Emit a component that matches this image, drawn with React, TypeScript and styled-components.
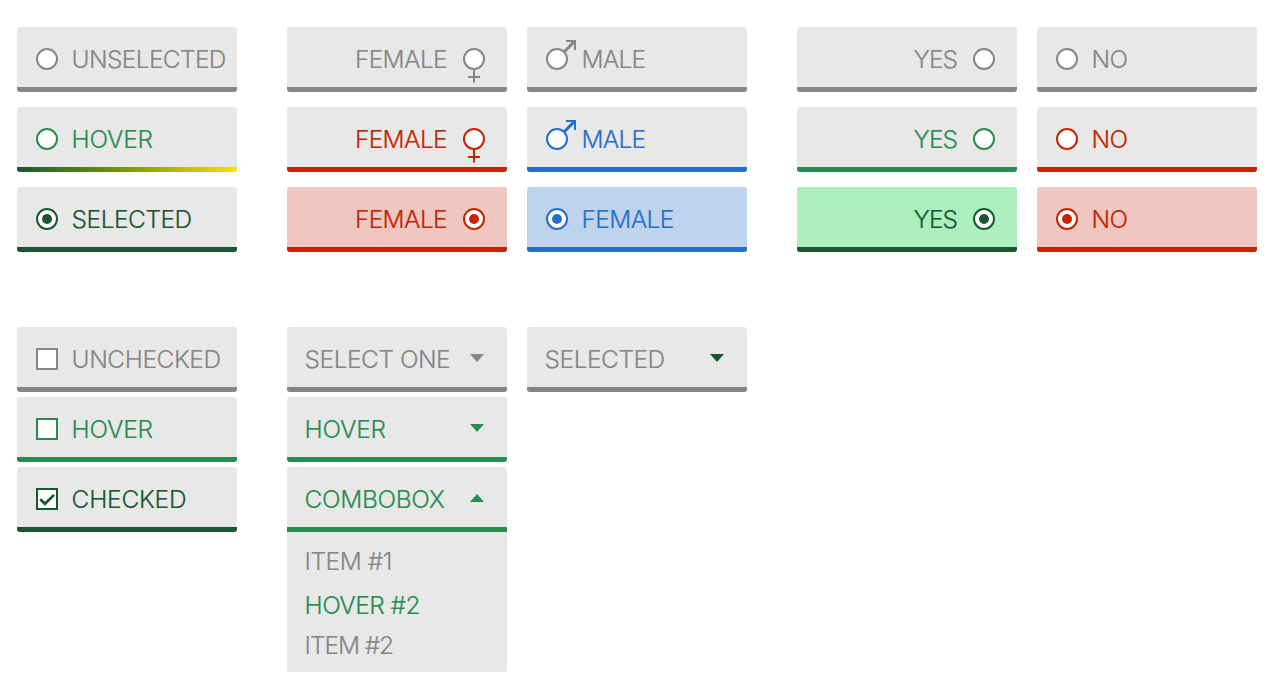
import React from "react";
import styled, { createGlobalStyle, css } from "styled-components";

const gray = "#868686";
const green = "#288c50";
const dark = "#1b5633";
const red = "#c62400";
const blue = "#246fca";
const surface = "#e8e8e8";
const pink = "#efc7c0";
const sky = "#bed3ee";
const mint = "#abefbf";

const GlobalStyle = createGlobalStyle`
  *, *::before, *::after { box-sizing: border-box; }
  body { margin: 0; background: #fff; }
`;

const Page = styled.main`
  display: flex;
  flex-direction: column;
  gap: 75px;
  min-height: 700px;
  padding: 27px 17px 0;
  font: 300 24.5px "Inter", "Liberation Sans", sans-serif;
  cursor: default;
`;

const Section = styled.section`
  display: flex;
  align-items: flex-start;
  gap: 50px;
`;

const Pair = styled.div`
  display: flex;
  align-items: flex-start;
  gap: 20px;
`;

const Stack = styled.div<{ $gap: number }>`
  display: flex;
  flex-direction: column;
  gap: ${(p) => p.$gap}px;
  width: 220px;
`;

const Card = styled.div<{ $color: string; $bar?: string; $fill?: string; $open?: boolean }>`
  display: flex;
  flex-direction: column;
  height: 65px;
  overflow: hidden;
  border-radius: ${(p) => (p.$open ? "3px 3px 0 0" : "3px")};
  background: ${(p) => p.$fill ?? surface};
  color: ${(p) => p.$color};

  &::after {
    content: "";
    height: 5px;
    background: ${(p) => p.$bar ?? p.$color};
  }
`;

const Face = styled.div<{ $kind: "start" | "end" | "select" }>`
  display: flex;
  align-items: center;
  height: 60px;
  ${(p) =>
    p.$kind === "start"
      ? css`
          gap: 14px;
          padding: 4px 0 0 19px;
        `
      : p.$kind === "end"
      ? css`
          flex-direction: row-reverse;
          gap: 16px;
          padding: 4px 22px 0 0;
        `
      : css`
          justify-content: space-between;
          padding: 4px 23px 0 18px;
        `}
`;

const Label = styled.span<{ $track: number }>`
  margin-left: -0.4px;
  line-height: 30px;
  letter-spacing: ${(p) => p.$track}px;
  white-space: pre;
  -webkit-text-stroke: 0.2px;
`;

const Radio = styled.span`
  position: relative;
  display: grid;
  place-items: center;
  flex: none;
  width: 22px;
  height: 22px;
  border: 2px solid currentColor;
  border-radius: 50%;
  background: #fff;
`;

const Dot = styled.span`
  width: 10px;
  height: 10px;
  border-radius: 50%;
  background: currentColor;
`;

const Box = styled.span`
  display: grid;
  place-items: center;
  flex: none;
  width: 22px;
  height: 22px;
  border: 2px solid currentColor;
  background: #fff;
`;

const Mark = styled.svg`
  position: absolute;
  left: -2px;
  top: -10px;
  overflow: visible;
`;

const Arrow = styled.svg<{ $color?: string }>`
  flex: none;
  margin-bottom: 2px;
  fill: ${(p) => p.$color ?? "currentColor"};
`;

const Menu = styled.ul`
  height: 140px;
  margin: -5px 0 0;
  padding: 9px 18px 0;
  list-style: none;
  border-radius: 0 0 3px 3px;
  background: ${surface};
`;

const Item = styled.li<{ $active?: boolean }>`
  display: flex;
  align-items: center;
  height: 40px;
  margin-top: ${(p) => (p.$active ? 4 : 0)}px;
  color: ${(p) => (p.$active ? green : gray)};
`;

/* letter spacing of each caption, in pixels */
const tracking: Record<string, number> = {
  UNSELECTED: -0.65,
  HOVER: -0.25,
  SELECTED: -0.5,
  FEMALE: -0.65,
  MALE: -0.8,
  YES: -1,
  NO: -0.8,
  UNCHECKED: -0.45,
  CHECKED: -0.25,
  "SELECT ONE": -0.5,
  COMBOBOX: -0.37,
  "ITEM #1": -0.5,
  "HOVER #2": -0.58,
  "ITEM #2": -1.1,
};

function Caption({ text }: { text: string }) {
  return <Label $track={tracking[text]}>{text}</Label>;
}

type OptionProps = {
  text: string;
  color: string;
  bar?: string;
  fill?: string;
  end?: boolean;
  on?: boolean;
  sign?: "female" | "male";
};

function RadioOption({ text, color, bar, fill, end, on, sign }: OptionProps) {
  return (
    <Card $color={color} $bar={bar} $fill={fill}>
      <Face $kind={end ? "end" : "start"}>
        <Radio>
          {on && <Dot />}
          {sign === "female" && (
            <Mark width="22" height="44" viewBox="0 -8 22 44" fill="currentColor">
              <path d="M10 21h2v13.5h-2zM5 28h12v2H5z" />
            </Mark>
          )}
          {sign === "male" && (
            <Mark width="32" height="30" viewBox="0 -8 32 30" fill="none" stroke="currentColor" strokeWidth="2">
              <path d="M20 -7h9v9" />
              <path d="M18.2 3.8L28.6 -6.6" strokeWidth="3" />
            </Mark>
          )}
        </Radio>
        <Caption text={text} />
      </Face>
    </Card>
  );
}

function CheckOption({ text, color, on }: { text: string; color: string; on?: boolean }) {
  return (
    <Card $color={color}>
      <Face $kind="start">
        <Box>
          {on && (
            <svg width="18" height="18" viewBox="2 2 18 18" fill="none" stroke="currentColor" strokeWidth="2.7">
              <path d="M4.2 11.3L9 15.8L18 6.9" />
            </svg>
          )}
        </Box>
        <Caption text={text} />
      </Face>
    </Card>
  );
}

type SelectProps = { text: string; color: string; arrow?: string; open?: boolean };

function Select({ text, color, arrow, open }: SelectProps) {
  return (
    <Card $color={color} $open={open}>
      <Face $kind="select">
        <Caption text={text} />
        <Arrow $color={arrow} width="14" height="8" viewBox="0 0 14 8">
          <path d={open ? "M0 8L7 0L14 8z" : "M0 0H14L7 8z"} />
        </Arrow>
      </Face>
    </Card>
  );
}

export default function App() {
  return (
    <>
      <GlobalStyle />
      <Page>
        <Section>
          <Stack $gap={15}>
            <RadioOption text="UNSELECTED" color={gray} />
            <RadioOption text="HOVER" color={green} bar={`linear-gradient(90deg, ${dark}, #7a9a00 50%, #fae000)`} />
            <RadioOption text="SELECTED" color={dark} on />
          </Stack>
          <Pair>
            <Stack $gap={15}>
              <RadioOption text="FEMALE" color={gray} end sign="female" />
              <RadioOption text="FEMALE" color={red} end sign="female" />
              <RadioOption text="FEMALE" color={red} fill={pink} end on />
            </Stack>
            <Stack $gap={15}>
              <RadioOption text="MALE" color={gray} sign="male" />
              <RadioOption text="MALE" color={blue} sign="male" />
              <RadioOption text="FEMALE" color={blue} fill={sky} on />
            </Stack>
          </Pair>
          <Pair>
            <Stack $gap={15}>
              <RadioOption text="YES" color={gray} end />
              <RadioOption text="YES" color={green} end />
              <RadioOption text="YES" color={dark} fill={mint} end on />
            </Stack>
            <Stack $gap={15}>
              <RadioOption text="NO" color={gray} />
              <RadioOption text="NO" color={red} />
              <RadioOption text="NO" color={red} fill={pink} on />
            </Stack>
          </Pair>
        </Section>
        <Section>
          <Stack $gap={5}>
            <CheckOption text="UNCHECKED" color={gray} />
            <CheckOption text="HOVER" color={green} />
            <CheckOption text="CHECKED" color={dark} on />
          </Stack>
          <Pair>
            <Stack $gap={5}>
              <Select text="SELECT ONE" color={gray} />
              <Select text="HOVER" color={green} />
              <Select text="COMBOBOX" color={green} open />
              <Menu>
                <Item>
                  <Caption text="ITEM #1" />
                </Item>
                <Item $active>
                  <Caption text="HOVER #2" />
                </Item>
                <Item>
                  <Caption text="ITEM #2" />
                </Item>
              </Menu>
            </Stack>
            <Stack $gap={5}>
              <Select text="SELECTED" color={gray} arrow={dark} />
            </Stack>
          </Pair>
        </Section>
      </Page>
    </>
  );
}
